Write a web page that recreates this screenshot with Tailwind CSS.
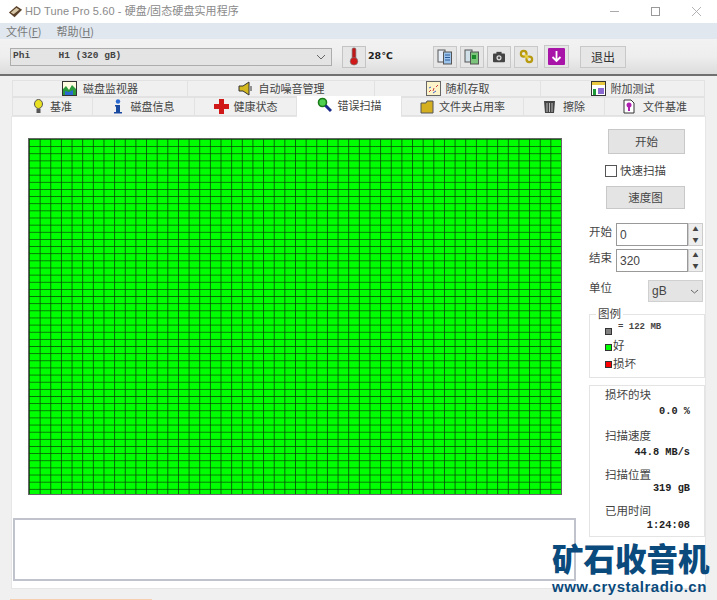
<!DOCTYPE html>
<html lang="zh">

<head>
  <meta charset="UTF-8">
  <script src="https://cdn.jsdelivr.net/npm/@tailwindcss/browser@4"></script>
  <title>HD Tune Pro 5.60</title>
</head>

<body class="relative w-[717px] h-[600px] overflow-hidden bg-[#f0f0f0] font-['Noto_Sans_CJK_SC','Noto_Sans',sans-serif] text-[12px] text-[#333]">

  <!-- title bar -->
  <div class="h-[23px] bg-white flex items-center pl-[8px] text-[#8a8a8a]">
    <svg width="15" height="15" viewBox="0 0 16 16" class="mr-[2px]"><path d="M1 9 L9 2 L15 6 L7 14 Z" fill="#5a4028"/><path d="M3 9 L9 4 L12 6 L6 11 Z" fill="#d8c8a8"/></svg>
    <span class="font-['Liberation_Sans','Noto_Sans_CJK_SC',sans-serif] text-[11px] tracking-[0.1px]">HD Tune Pro 5.60 - 硬盘/固态硬盘实用程序</span>
    <div class="ml-auto flex items-center mr-[16px] gap-[32px]">
      <div class="w-[9px] h-px bg-[#aaa]"></div>
      <div class="w-[9px] h-[9px] border border-[#999]"></div>
      <svg width="9" height="9" viewBox="0 0 10 10"><path d="M0 0 L10 10 M10 0 L0 10" stroke="#aaa" fill="none"/></svg>
    </div>
  </div>

  <!-- menu -->
  <div class="h-[16px] bg-[#e0e7ef] flex items-center pl-[6px] gap-[15px] text-[#777] text-[11px]">
    <span>文件(<u>F</u>)</span>
    <span>帮助(<u>H</u>)</span>
  </div>

  <!-- toolbar -->
  <div class="h-[37px] bg-gradient-to-b from-[#f2f2f2] via-[#eeeeee] to-[#dcdcdc] border-b-2 border-[#707070] flex items-center pl-[10px]">
    <div class="w-[322px] h-[18px] bg-[#e4e4e4] border border-[#adadad] flex items-center pl-[2px] pr-[5px] font-['Liberation_Mono',monospace] text-[9.5px] font-bold text-[#444]">
      <span class="whitespace-pre">Phi     H1 (320 gB)</span>
      <svg width="10" height="6" viewBox="0 0 10 6" class="ml-auto"><path d="M1 1 L5 5 L9 1" stroke="#666" fill="none"/></svg>
    </div>
    <div class="ml-[10px] w-[24px] h-[22px] bg-[#e6e6e6] border border-[#c4c4c4] flex items-center justify-center">
      <svg width="12" height="19" viewBox="0 0 12 20"><rect x="4" y="1" width="4" height="13" rx="1.500" fill="#c01818" stroke="#777" stroke-width=".7"/><circle cx="6" cy="15" r="4" fill="#d01818" stroke="#777" stroke-width=".7"/></svg>
    </div>
    <span class="ml-[2px] w-[38px] font-['DejaVu_Sans',sans-serif] font-bold text-[9.5px] text-[#222]">28℃</span>
    <div class="ml-[27px] flex gap-[3px]">
      <div class="w-[24px] h-[22px] bg-[#e6e6e6] border border-[#c8c8c8] flex items-center justify-center">
        <svg width="16" height="16" viewBox="0 0 16 16"><rect x="1" y="1" width="7" height="12" fill="#e8eef8" stroke="#555"/><rect x="6.500" y="3" width="8" height="12" fill="#9cc4ec" stroke="#555"/><path d="M8 6 H13 M8 8.500 H13 M8 11 H13" stroke="#2a5a9a"/></svg>
      </div>
      <div class="w-[24px] h-[22px] bg-[#e6e6e6] border border-[#c8c8c8] flex items-center justify-center">
        <svg width="16" height="16" viewBox="0 0 16 16"><rect x="1" y="1" width="7" height="12" fill="#cfe0e8" stroke="#555"/><rect x="6.500" y="3" width="8" height="12" fill="#7cc47c" stroke="#555"/><rect x="8" y="6" width="4" height="4" fill="#1a8a2a"/></svg>
      </div>
      <div class="w-[24px] h-[22px] bg-[#e6e6e6] border border-[#c8c8c8] flex items-center justify-center">
        <svg width="14" height="12" viewBox="0 0 16 14"><rect x="1" y="3" width="14" height="10" rx="1" fill="#444"/><rect x="5" y="1" width="6" height="3" fill="#444"/><circle cx="8" cy="8" r="3" fill="#ddd"/><circle cx="8" cy="8" r="1.500" fill="#555"/></svg>
      </div>
      <div class="w-[24px] h-[22px] bg-[#e6e6e6] border border-[#c8c8c8] flex items-center justify-center">
        <svg width="15" height="15" viewBox="0 0 16 16"><circle cx="5" cy="5" r="3" fill="none" stroke="#b89a10" stroke-width="2.400"/><circle cx="11" cy="11" r="3" fill="none" stroke="#b89a10" stroke-width="2.400"/><path d="M6 6 L10 10" stroke="#e8d040" stroke-width="2.400"/></svg>
      </div>
    </div>
    <div class="ml-[6px] w-[25px] h-[23px] bg-[#e6e6e6] border border-[#c8c8c8] flex items-center justify-center">
      <div class="w-[17px] h-[17px] bg-[#a814a8] rounded-[1px] flex items-center justify-center">
        <svg width="11" height="13" viewBox="0 0 11 13"><path d="M5.500 1 V11 M1.500 7 L5.500 11 L9.500 7" stroke="#fff" stroke-width="1.800" fill="none"/></svg>
      </div>
    </div>
    <div class="ml-[11px] w-[46px] h-[22px] bg-[#e6e6e6] border border-[#c8c8c8] flex items-center justify-center text-[#333]">退出</div>
  </div>

  <!-- tabs -->
  <div class="pl-[12px] pt-[4px] text-[#444] text-[11px]">
    <div class="flex h-[17px] w-[693px]">
      <div class="w-[176px] border border-[#e2e2e2] flex items-center justify-center gap-[6px]">
        <svg width="15" height="15" viewBox="0 0 15 15"><rect x=".5" y=".5" width="14" height="14" fill="#fdfbe0" stroke="#333"/><path d="M1 14 V8 L4 5 L7 9 L10 4 L14 8 V14 Z" fill="#2a9a3a"/><path d="M3 14 V10 L7 11 L11 9 V14 Z" fill="#2a6ad0"/></svg>
        <span>磁盘监视器</span>
      </div>
      <div class="w-[187px] border border-l-0 border-[#e2e2e2] flex items-center justify-center gap-[5px]">
        <svg width="16" height="15" viewBox="0 0 16 15"><path d="M1 5 H5 L11 1 V14 L5 10 H1 Z" fill="#d4b820" stroke="#333"/><path d="M13 5 V10" stroke="#333"/></svg>
        <span>自动噪音管理</span>
      </div>
      <div class="w-[166px] border border-l-0 border-[#e2e2e2] flex items-center justify-center gap-[5px]">
        <svg width="15" height="15" viewBox="0 0 15 15"><rect x=".5" y=".5" width="14" height="14" fill="#fdf3c8" stroke="#666"/><path d="M3 11 L5 9 M7 10 L8 7 M10 6 L12 4" stroke="#d04040"/><path d="M3 7 L5 6 M7 12 L10 10" stroke="#4060d0"/></svg>
        <span>随机存取</span>
      </div>
      <div class="w-[164px] border border-l-0 border-[#e2e2e2] flex items-center justify-center gap-[5px]">
        <svg width="15" height="15" viewBox="0 0 15 15"><rect x=".5" y=".5" width="14" height="14" fill="#fff" stroke="#333"/><rect x="1" y="1" width="13" height="3" fill="#e8c840"/><rect x="2" y="8" width="3" height="6" fill="#1c9a3a"/><rect x="7" y="7" width="6" height="6" fill="#8a6ad0"/></svg>
        <span>附加测试</span>
      </div>
    </div>
    <div class="flex h-[19px] w-[693px] items-end">
      <div class="w-[81px] h-[19px] border border-[#e2e2e2] flex items-center justify-center gap-[6px]">
        <svg width="11" height="15" viewBox="0 0 11 15"><ellipse cx="5.500" cy="5" rx="4" ry="4.500" fill="#e8e020" stroke="#555"/><rect x="3.500" y="10" width="4" height="4" fill="#555"/></svg>
        <span>基准</span>
      </div>
      <div class="w-[102px] h-[19px] border border-l-0 border-[#e2e2e2] flex items-center justify-center gap-[8px]">
        <svg width="10" height="15" viewBox="0 0 10 15"><circle cx="5" cy="2.500" r="2.200" fill="#2a6ad0"/><path d="M2 6 H7 V13 H9 V14.500 H1 V13 H3 V7.500 H2 Z" fill="#1a4aa0"/></svg>
        <span>磁盘信息</span>
      </div>
      <div class="w-[102px] h-[19px] border border-l-0 border-[#e2e2e2] flex items-center justify-center gap-[5px]">
        <svg width="15" height="15" viewBox="0 0 15 15"><path d="M5 0 H10 V5 H15 V10 H10 V15 H5 V10 H0 V5 H5 Z" fill="#d01818"/></svg>
        <span>健康状态</span>
      </div>
      <div class="w-[104px] h-[21px] -mb-px z-10 bg-white flex items-start pt-[1px] justify-center gap-[6px]">
        <svg width="15" height="16" viewBox="0 0 15 16"><circle cx="5.500" cy="5.500" r="4" fill="#50d050" stroke="#1a7a1a" stroke-width="1.600"/><path d="M8.500 8.500 L14 14" stroke="#1a2a8a" stroke-width="3"/></svg>
        <span>错误扫描</span>
      </div>
      <div class="w-[123px] h-[19px] border border-[#e2e2e2] flex items-center justify-center gap-[4px]">
        <svg width="15" height="15" viewBox="0 0 15 15"><path d="M1 4 H6 L7 2 H13 V14 H1 Z" fill="#d4b020" stroke="#555"/></svg>
        <span>文件夹占用率</span>
      </div>
      <div class="w-[81px] h-[19px] border border-l-0 border-[#e2e2e2] flex items-center justify-center gap-[7px]">
        <svg width="13" height="15" viewBox="0 0 13 15"><path d="M1 2 H12 L11 14 H2 Z" fill="#444"/><path d="M4 4 V13 M6.500 4 V13 M9 4 V13" stroke="#bbb"/></svg>
        <span>擦除</span>
      </div>
      <div class="w-[100px] h-[19px] border border-l-0 border-[#e2e2e2] flex items-center justify-center gap-[7px]">
        <svg width="14" height="15" viewBox="0 0 14 15"><path d="M2 1 H9 L12 4 V14 H2 Z" fill="#fff" stroke="#333"/><circle cx="7" cy="6" r="2.500" fill="#b020b0"/><rect x="6" y="8" width="2" height="4" fill="#b020b0"/></svg>
        <span>文件基准</span>
      </div>
    </div>
  </div>

  <!-- panel -->
  <div class="ml-[11px] w-[695px] h-[473px] bg-white border border-[#e6e6e6] flex">
    <div class="w-[577px] shrink-0 pl-[1px]">
      <div class="ml-[15px] mt-[21px] w-[534px] h-[357px] border border-[#666]">
        <svg width="532" height="355" class="block">
          <defs>
            <pattern id="cell" width="10.640" height="7.140" patternUnits="userSpaceOnUse">
              <rect width="10.640" height="7.140" fill="#00ff00"/>
              <path d="M0 0 H10.640 M0 0 V7.140" stroke="#0a3a0a" stroke-width="1.500" fill="none"/>
            </pattern>
          </defs>
          <rect width="532" height="355" fill="url(#cell)"/>
        </svg>
      </div>
      <div class="mt-[23px] w-[563px] h-[63px] border-2 border-[#c0c2cc] bg-white"></div>
    </div>

    <div class="w-[117px] pt-[12px] text-[#444] text-[11.5px]">
      <div class="ml-[19px] w-[77px] h-[25px] bg-[#e4e4e4] border border-[#c8c8c8] flex items-center justify-center">开始</div>
      <div class="ml-[16px] mt-[10px] h-[14px] flex items-center gap-[3px]">
        <div class="w-[12px] h-[12px] border border-[#555] bg-white"></div>
        <span>快速扫描</span>
      </div>
      <div class="ml-[17px] mt-[8px] w-[79px] h-[23px] bg-[#e4e4e4] border border-[#c8c8c8] flex items-center justify-center">速度图</div>

      <div class="mt-[14px] h-[23px] flex items-center">
        <span class="w-[27px] mb-[6px]">开始</span>
        <div class="w-[72px] h-[23px] border border-[#999] bg-white pl-[3px] flex items-center font-['Liberation_Sans',sans-serif] text-[12px]">0</div>
        <div class="w-[15px] h-[23px] border border-[#ccc] bg-[#eeeeee] flex flex-col items-center justify-around text-[6px] leading-none"><span>▲</span><span>▼</span></div>
      </div>
      <div class="mt-[3px] h-[23px] flex items-center">
        <span class="w-[27px] mb-[6px]">结束</span>
        <div class="w-[72px] h-[23px] border border-[#999] bg-white pl-[3px] flex items-center font-['Liberation_Sans',sans-serif] text-[12px]">320</div>
        <div class="w-[15px] h-[23px] border border-[#ccc] bg-[#eeeeee] flex flex-col items-center justify-around text-[6px] leading-none"><span>▲</span><span>▼</span></div>
      </div>
      <div class="mt-[8px] h-[22px] flex items-center">
        <span class="w-[59px] mb-[6px]">单位</span>
        <div class="w-[55px] h-[22px] bg-[#e4e4e4] border border-[#d0d0d0] flex items-center pl-[3px] pr-[3px] font-['Liberation_Sans',sans-serif] text-[12px]">
          gB
          <svg width="9" height="5" viewBox="0 0 9 5" class="ml-auto"><path d="M1 1 L4.500 4 L8 1" stroke="#666" fill="none"/></svg>
        </div>
      </div>

      <div class="relative mt-[12px] w-[116px] h-[64px] border border-[#e4e4e4] pt-[6px] pl-[15px]">
        <span class="absolute left-[6px] -top-[10px] bg-white px-[2px]">图例</span>
        <div class="flex items-center h-[16px] gap-[6px] font-['Liberation_Mono',monospace] text-[9px] font-bold text-[#444]"><div class="w-[7px] h-[7px] mt-[4px] bg-[#808080] border border-[#333]"></div><span class="mb-[2px]">= 122 MB</span></div>
        <div class="flex items-center h-[18px] gap-[1px]"><div class="w-[7px] h-[7px] mt-[2px] bg-[#00ff00] border border-[#333]"></div>好</div>
        <div class="flex items-center h-[17px] gap-[1px]"><div class="w-[7px] h-[7px] mt-[2px] bg-[#ff0000] border border-[#333]"></div>损坏</div>
      </div>

      <div class="mt-[7px] w-[116px] h-[152px] border border-[#e4e4e4] pl-[15px] pr-[14px]">
        <div class="h-[18px]">损坏的块</div>
        <div class="h-[23px] text-right font-['Liberation_Mono',monospace] text-[10.3px] font-bold text-[#222]">0.0 %</div>
        <div class="h-[18px]">扫描速度</div>
        <div class="h-[21px] text-right font-['Liberation_Mono',monospace] text-[10.3px] font-bold text-[#222]">44.8 MB/s</div>
        <div class="h-[15px]">扫描位置</div>
        <div class="h-[21px] text-right font-['Liberation_Mono',monospace] text-[10.3px] font-bold text-[#222]">319 gB</div>
        <div class="h-[16px]">已用时间</div>
        <div class="text-right font-['Liberation_Mono',monospace] text-[10.3px] font-bold text-[#222]">1:24:08</div>
      </div>
    </div>
  </div>

  <!-- bottom progress sliver -->
  <div class="absolute left-[10px] bottom-0 w-[142px] h-px bg-[#f5cfae]"></div>

  <!-- watermark -->
  <div class="absolute left-[552px] top-[541px] w-[160px] text-[#0b4a7c]">
    <div class="text-[31.500px] leading-[32px] font-black whitespace-nowrap">矿石收音机</div>
    <div class="mt-[4px] font-['Liberation_Sans',sans-serif] font-bold text-[15px] leading-[20px] tracking-[0.500px] whitespace-nowrap">www.crystalradio.cn</div>
  </div>
</body>

</html>
